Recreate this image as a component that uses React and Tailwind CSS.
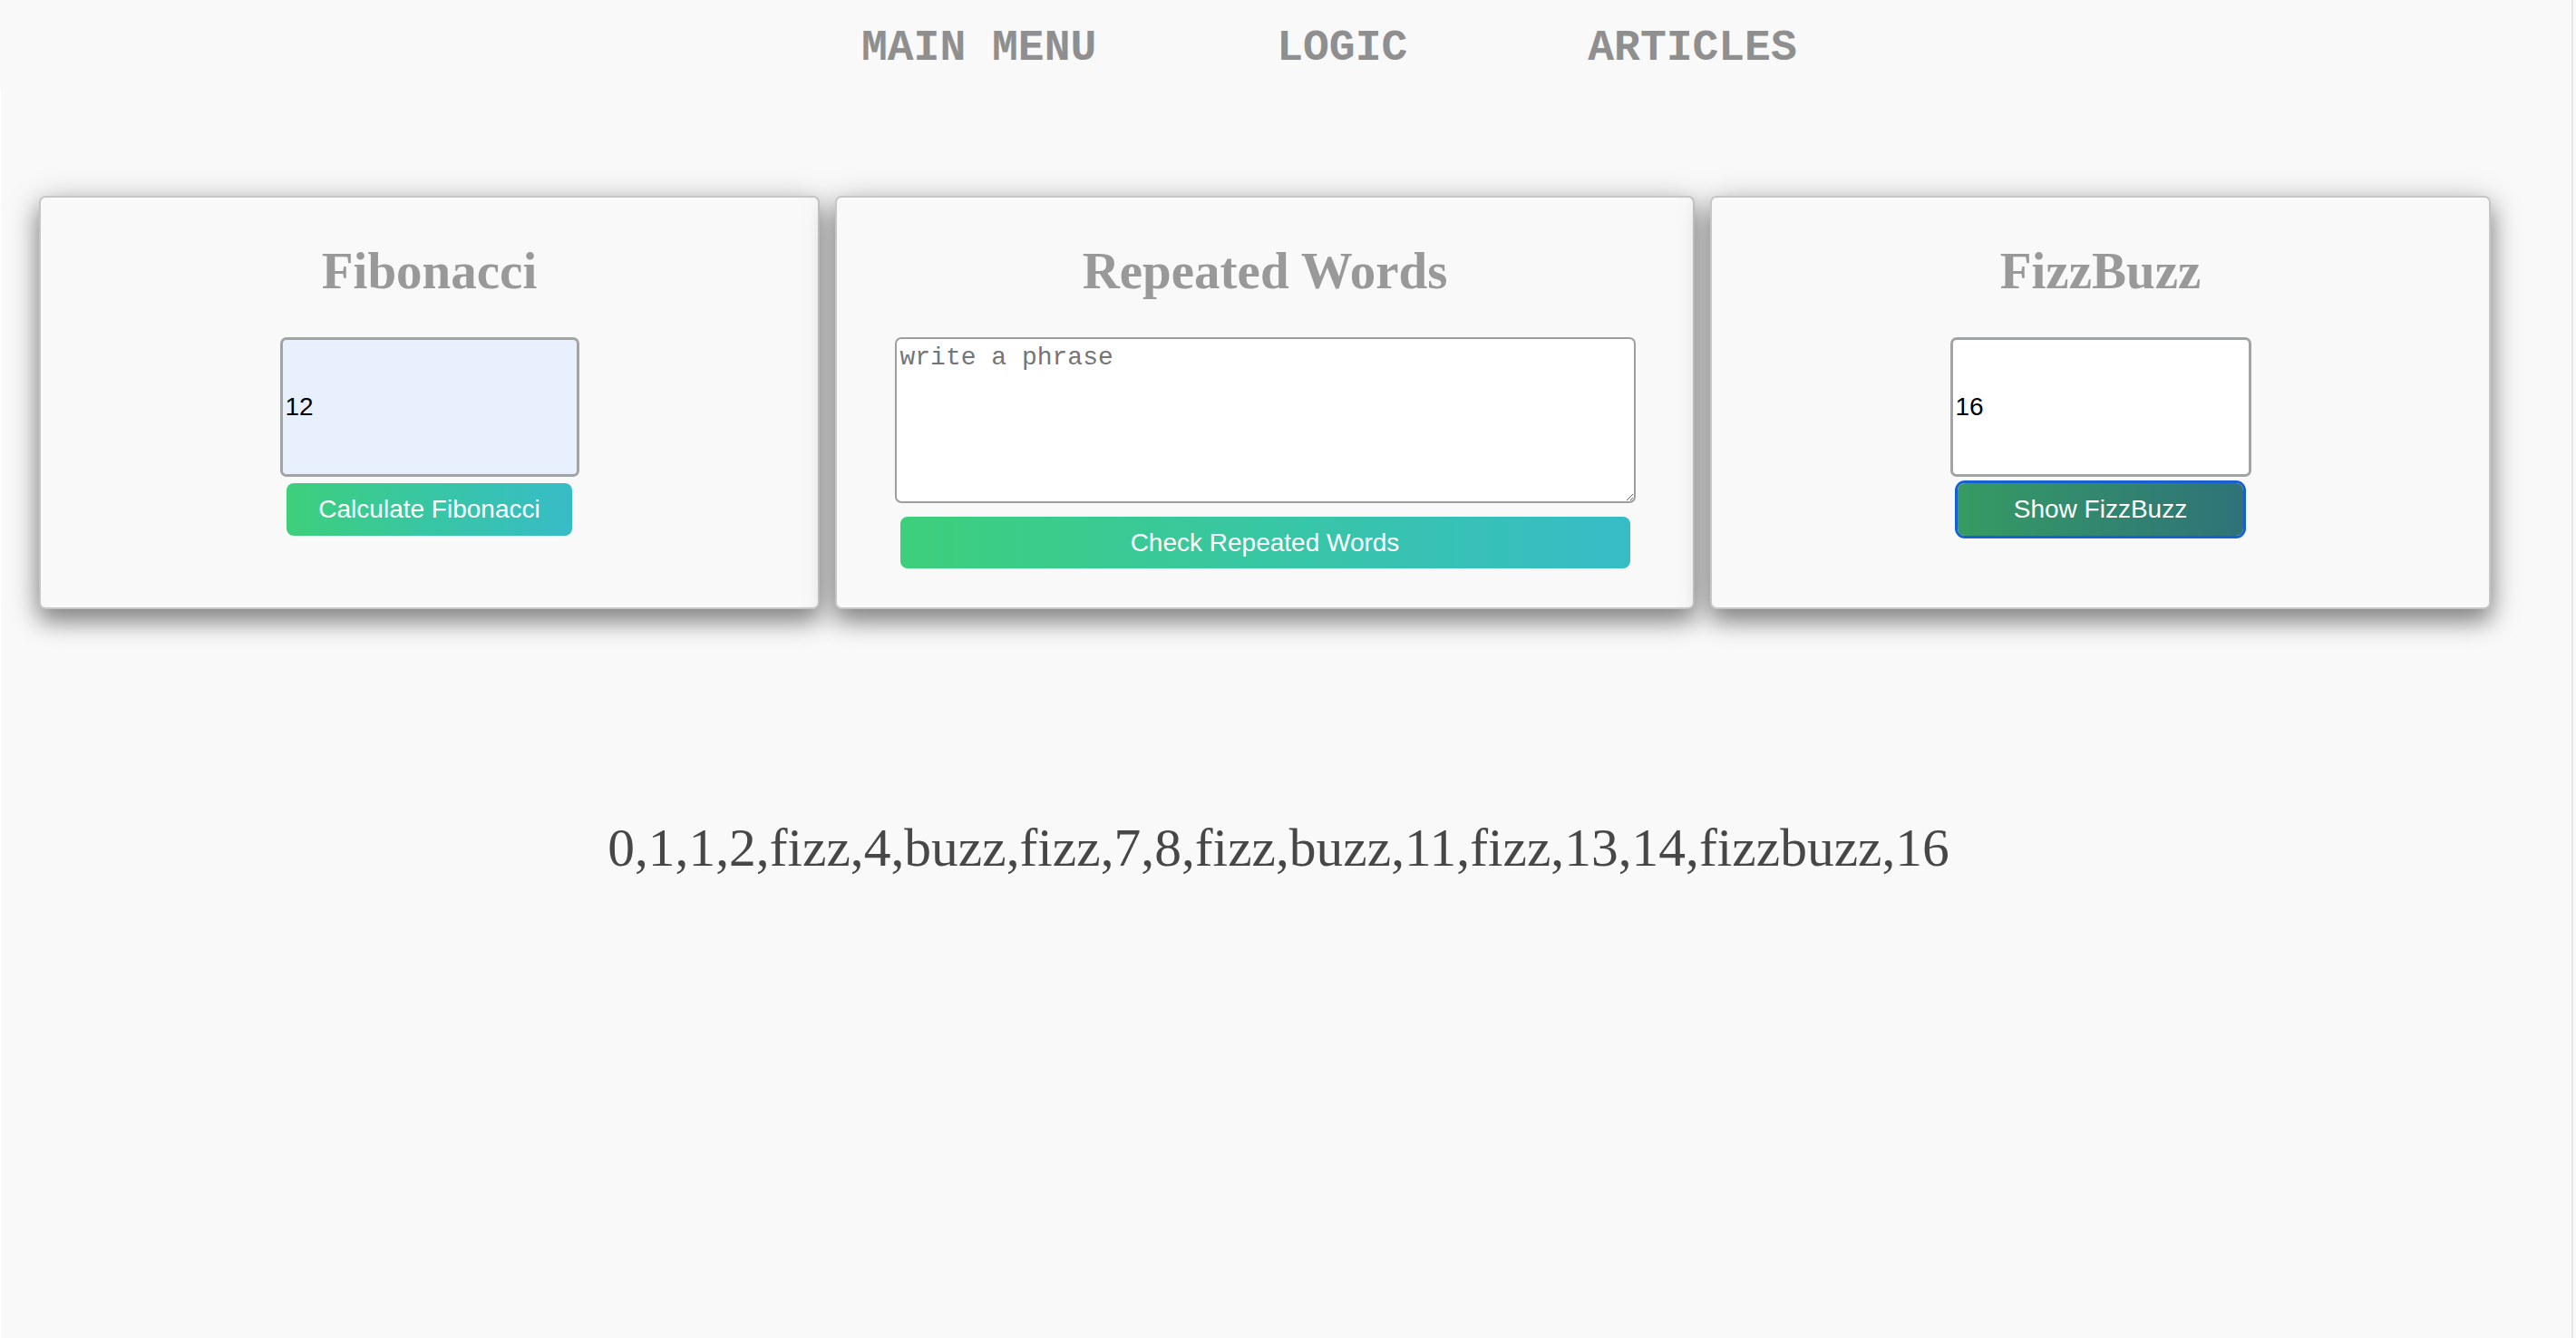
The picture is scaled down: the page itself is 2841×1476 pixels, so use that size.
import { useState } from "react";

const navItems = ["MAIN MENU", "LOGIC", "ARTICLES"];

const Card = ({ title, width, children }) => (
    <div
        className={`flex flex-col items-center h-[456px] pt-[52px] rounded-[7px] border-2 border-[#c5c7c7] bg-[#f9f9f9] shadow-[0_14px_24px_0_rgba(0,0,0,0.34),0_6px_36px_0_rgba(0,0,0,0.26)] ${width}`}
    >
        <h2 className="text-[57px] leading-none font-bold text-[#999999] font-['Liberation_Serif',serif]">{title}</h2>
        {children}
    </div>
);

const App = () => {
    const [fib, setFib] = useState("12");
    const [phrase, setPhrase] = useState("");
    const [fizz, setFizz] = useState("16");

    return (
        <div className="relative min-h-screen w-full bg-[#f9f9f9] font-['Liberation_Sans',Arial,sans-serif]">
            <div className="absolute right-[3px] top-0 h-full w-[2px] bg-[#e6e6e6]"></div>

            <nav className="flex h-[100px] pl-[950px] pt-[29px] gap-[199px]">
                {navItems.map((item) => (
                    <a key={item} href="#" className="text-[48px] leading-none font-bold text-[#8f8f8f] font-['Liberation_Mono',monospace]">
                        {item}
                    </a>
                ))}
            </nav>

            <main className="border-l border-white min-h-[1376px] pr-[22px]">
                <div className="flex gap-[17px] pl-[42px] pt-[116px]">
                    <Card title="Fibonacci" width="w-[861px]">
                        <input
                            type="text"
                            value={fib}
                            onChange={(e) => setFib(e.target.value)}
                            className="mt-[45px] w-[330px] h-[154px] px-[3px] rounded-[7px] border-[3px] border-[#a0a4a4] bg-[#e8f0fe] text-[28px] text-black outline-none"
                        />
                        <button className="mt-[7px] w-[315px] h-[58px] rounded-[8px] bg-linear-to-r from-[#3dcf7a] to-[#37bcc7] text-[28px] text-white">
                            Calculate Fibonacci
                        </button>
                    </Card>

                    <Card title="Repeated Words" width="w-[948px]">
                        <textarea
                            value={phrase}
                            onChange={(e) => setPhrase(e.target.value)}
                            placeholder="write a phrase"
                            className="mt-[45px] w-[817px] h-[183px] px-[4px] pt-[5px] rounded-[7px] border-2 border-[#9c9f9f] bg-white text-[28px] leading-[1.15] text-black placeholder:text-[#757575] font-['Liberation_Mono',monospace] outline-none"
                        />
                        <button className="mt-[15px] w-[805px] h-[57px] rounded-[8px] bg-linear-to-r from-[#3dcf7a] to-[#37bcc7] text-[28px] text-white">
                            Check Repeated Words
                        </button>
                    </Card>

                    <Card title="FizzBuzz" width="w-[861px]">
                        <input
                            type="text"
                            value={fizz}
                            onChange={(e) => setFizz(e.target.value)}
                            className="mt-[45px] w-[332px] h-[154px] px-[3px] rounded-[7px] border-[3px] border-[#a0a4a4] bg-white text-[28px] text-black outline-none"
                        />
                        <button className="mt-[7px] w-[315px] h-[58px] rounded-[8px] ring-[3px] ring-[#1760d4] bg-linear-to-r from-[#369b62] to-[#2f7278] text-[28px] text-white">
                            Show FizzBuzz
                        </button>
                    </Card>
                </div>

                <p className="mt-[234px] text-center text-[59.5px] leading-none text-[#474747] font-['Liberation_Serif',serif]">
                    0,1,1,2,fizz,4,buzz,fizz,7,8,fizz,buzz,11,fizz,13,14,fizzbuzz,16
                </p>
            </main>
        </div>
    );
};

export default App;
